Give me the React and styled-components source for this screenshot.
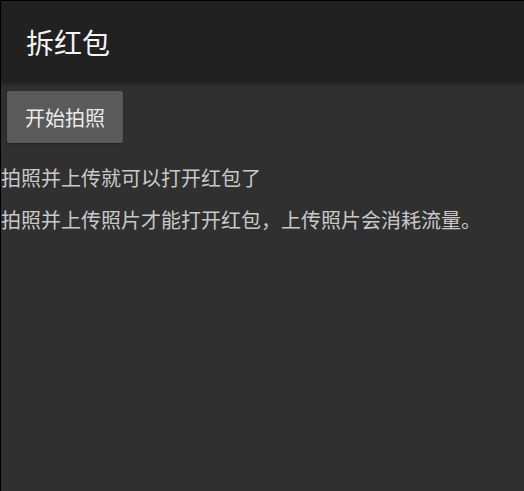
import React from 'react';
import styled, { createGlobalStyle } from 'styled-components';

const GlobalStyle = createGlobalStyle`
  html, body {
    margin: 0;
    padding: 0;
    background: #303030;
  }
  body {
    font-family: "Noto Sans CJK SC", "Noto Sans", sans-serif;
  }
`;

const Screen = styled('div')`
  display: flex;
  flex-direction: column;
  height: 491px;
  box-sizing: border-box;
  border-top: 1px solid #000;
  border-left: 1px solid #000;
  background: #303030;
  overflow: hidden;
`;

const ActionBar = styled('div')`
  display: flex;
  align-items: center;
  height: 81px;
  padding-left: 25px;
  background: #212121;
  box-shadow: 0 2px 4px rgba(0, 0, 0, 0.35);
  position: relative;
  z-index: 1;
`;

const Title = styled('h1')`
  margin: 0;
  font-size: 28px;
  font-weight: 400;
  color: #f4f4f4;
  line-height: 1;
`;

const Content = styled('div')`
  display: flex;
  flex-direction: column;
  align-items: flex-start;
  padding-top: 9px;
`;

const Button = styled('button')`
  margin-left: 6px;
  width: 116px;
  height: 52px;
  padding: 0;
  border: none;
  border-radius: 2px;
  background: #5a5a5a;
  color: #ececec;
  font-family: inherit;
  font-size: 20px;
  box-shadow: 0 1px 2px rgba(0, 0, 0, 0.3);
`;

const Line = styled('p')`
  margin: ${p => p.$top}px 0 0 0;
  font-size: 20px;
  line-height: 28px;
  color: #c9c9c9;
  white-space: nowrap;
`;

export default function App() {
  return (
    <>
      <GlobalStyle />
      <Screen>
        <ActionBar>
          <Title>拆红包</Title>
        </ActionBar>
        <Content>
          <Button>开始拍照</Button>
          <Line $top={21}>拍照并上传就可以打开红包了</Line>
          <Line $top={14}>拍照并上传照片才能打开红包，上传照片会消耗流量。</Line>
        </Content>
      </Screen>
    </>
  );
}
